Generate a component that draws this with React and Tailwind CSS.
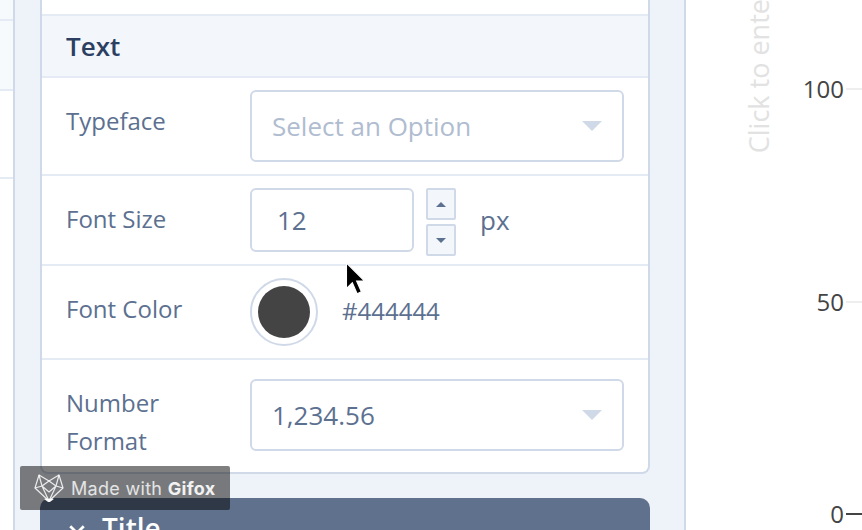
const Caret = ({ className }) => (
  <svg viewBox="0 0 20 10" className={className}>
    <path d="M0 0h20L10 10z" fill="currentColor" />
  </svg>
);

function Select({ value, placeholder }) {
  return (
    <div className={"flex h-[72px] w-[374px] items-center justify-between rounded-[6px] border-2 border-[#d0d9e8] bg-white pl-[20px] pr-[20px] text-[26px] " + (placeholder ? "text-[#b0bcd0]" : "text-[#5c7090]")}>
      <span>{value}</span>
      <Caret className="h-[10px] w-[20px] text-[#d0d9e8]" />
    </div>
  );
}

function Row({ label, className, labelClass, children }) {
  return (
    <div className={"flex items-center border-b-2 border-[#e5ebf5] pl-[24px] " + className}>
      <div className={"w-[184px] shrink-0 text-[24px] leading-[38px] text-[#5c7090] " + labelClass}>{label}</div>
      {children}
    </div>
  );
}

function Stepper() {
  return (
    <div className="ml-[12px] mt-[4px] flex flex-col gap-[4px]">
      <div className="flex h-[32px] w-[30px] items-center justify-center rounded-[2px] border-2 border-[#d0d9e8] bg-[#f3f6fb]">
        <Caret className="h-[5px] w-[10px] rotate-180 text-[#5c7090]" />
      </div>
      <div className="flex h-[32px] w-[30px] items-center justify-center rounded-[2px] border-2 border-[#d0d9e8] bg-[#f3f6fb]">
        <Caret className="h-[5px] w-[10px] text-[#5c7090]" />
      </div>
    </div>
  );
}

function FoxLogo() {
  return (
    <svg viewBox="0 0 30 28" className="h-[28px] w-[30px]" fill="none" stroke="#fff" strokeWidth="1.200" strokeLinejoin="round" strokeOpacity="0.85">
      <path d="M15 27 1 14 5 1l10 6 10-6 4 13z" />
      <path d="M5 1l3 11-7 2M25 1l-3 11 7 2M8 12l7-5 7 5M8 12l7 15 7-15M8 12l7 6 7-6" />
      <path d="M11 25h8l-4 3z" fill="#fff" />
    </svg>
  );
}

function Cursor() {
  return (
    <svg viewBox="0 0 18 32" className="absolute left-[345px] top-[263px] h-[34px] w-[20px]">
      <path d="M1 0v24l5.500-5.500L11 29l4-2-4.500-10H18z" fill="#000" stroke="#fff" strokeWidth="1" />
    </svg>
  );
}

export default function App() {
  return (
    <div className="relative flex h-[530px] w-[862px] overflow-hidden bg-white font-['Open_Sans',sans-serif]">
      <div className="flex w-[15px] shrink-0 flex-col border-r-2 border-[#d0d9e8]">
        <div className="h-[21px] border-b-2 border-[#e5ebf5] bg-[#f7fafd]" />
        <div className="h-[70px] border-b-2 border-[#e5ebf5] bg-[#f7fafd]" />
        <div className="h-[88px] border-b-2 border-[#e5ebf5]" />
      </div>

      <div className="w-[671px] shrink-0 border-r-2 border-[#d0d9e8] bg-[#eef2f9] pl-[25px]">
        <div className="w-[610px] rounded-b-[8px] border-x-2 border-b-2 border-[#d0d9e8] bg-white">
          <div className="h-[16px] border-b-2 border-[#e5ebf5]" />
          <div className="flex h-[62px] items-center border-b-2 border-[#e5ebf5] bg-[#f3f6fb] pl-[24px] text-[26px] font-semibold text-[#2a3f62]">
            Text
          </div>
          <Row label="Typeface" className="h-[98px]" labelClass="pb-[10px]">
            <Select value="Select an Option" placeholder />
          </Row>
          <Row label="Font Size" className="h-[90px]" labelClass="pb-[2px]">
            <div className="flex h-[64px] w-[164px] items-center rounded-[6px] border-2 border-[#d0d9e8] pl-[25px] text-[26px] text-[#5c7090]">12</div>
            <Stepper />
            <span className="ml-[24px] text-[26px] text-[#5c7090]">px</span>
          </Row>
          <Row label="Font Color" className="h-[94px]" labelClass="pb-[6px]">
            <div className="flex h-[68px] w-[68px] items-center justify-center rounded-full border-2 border-[#d0d9e8] bg-white">
              <div className="h-[52px] w-[52px] rounded-full bg-[#444444]" />
            </div>
            <span className="ml-[24px] pb-[2px] text-[24px] text-[#5c7090]">#444444</span>
          </Row>
          <div className="flex h-[112px] items-center pb-[2px] pl-[24px]">
            <div className="w-[184px] shrink-0 pt-[14px] text-[24px] leading-[38px] text-[#5c7090]">Number<br />Format</div>
            <Select value="1,234.56" />
          </div>
        </div>
        <div className="mt-[24px] flex h-[60px] w-[610px] items-start rounded-t-[10px] bg-[#5f718c] pl-[28px] pt-[9px] text-[28px] font-semibold text-white">
          <svg viewBox="0 0 16 16" className="mr-[16px] mt-[17px] h-[18px] w-[18px]" fill="none" stroke="#fff" strokeWidth="2.500">
            <path d="M2 2l12 12M14 2 2 14" />
          </svg>
          Title
        </div>
      </div>

      <div className="relative flex-1 overflow-hidden">
        <div className="ml-[60px] flex h-[153px] w-[26px] flex-col justify-end overflow-hidden">
          <span className="rotate-180 whitespace-nowrap text-[27px] leading-[26px] text-[#e2e2e2] [writing-mode:vertical-rl]">Click to enter</span>
        </div>
        <div className="absolute left-[99px] top-[75px] flex h-[453px] w-[77px] flex-col justify-between">
          {[["100", "bg-[#eeeeee]"], ["50", "bg-[#eeeeee]"], ["0", "bg-[#444444]"]].map(([n, line]) => (
            <div key={n} className="flex h-[28px] items-center justify-end">
              <span className="text-[24px] leading-[28px] text-[#444444]">{n}</span>
              <div className={"ml-[2px] h-[2px] w-[16px] " + line} />
            </div>
          ))}
        </div>
      </div>

      <Cursor />

      <div className="absolute left-[20px] top-[466px] flex h-[44px] w-[210px] items-center rounded-[2px] bg-[#000000]/50 pl-[14px]">
        <FoxLogo />
        <span className="ml-[7px] font-['Inter',sans-serif] text-[18px] tracking-[0.3px] text-white/80">
          Made with <span className="font-bold text-white/90">Gifox</span>
        </span>
      </div>
    </div>
  );
}
